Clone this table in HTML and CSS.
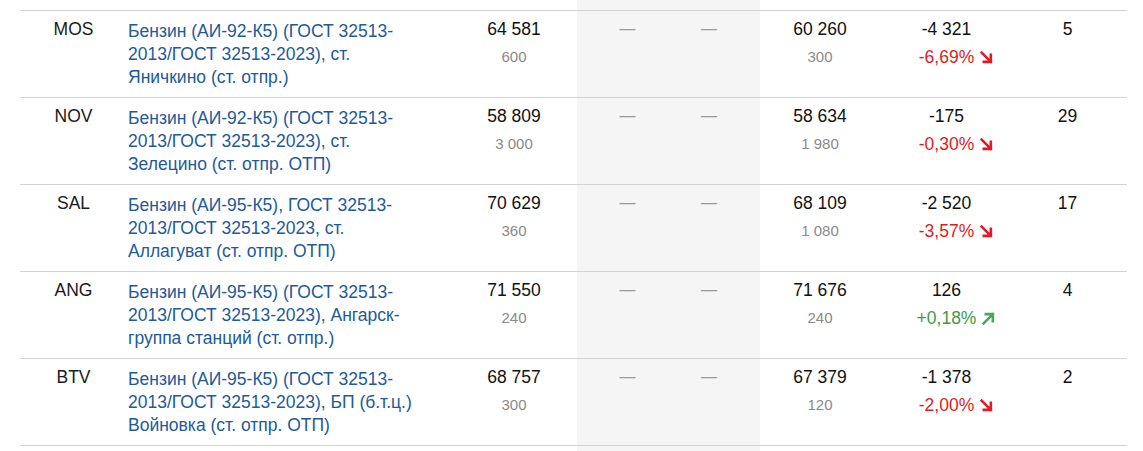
FILE: index.html
```html
<!DOCTYPE html>
<html lang="ru">
<head>
<meta charset="utf-8">
<title>Котировки</title>
<link rel="stylesheet" href="styles.css">
</head>
<body>
<div class="wrap">
<table class="quotes">
  <colgroup>
    <col class="c-code"><col class="c-desc"><col class="c-p1"><col class="c-ga"><col class="c-gb"><col class="c-p2"><col class="c-ch"><col class="c-n">
  </colgroup>
  <tbody>
    <tr class="stub">
      <td></td><td></td><td></td><td class="grey"></td><td class="grey"></td><td></td><td></td><td></td>
    </tr>
    <tr>
      <td class="code">MOS</td>
      <td class="desc"><a href="#">Бензин (АИ-92-К5) (ГОСТ 32513-2013/ГОСТ 32513-2023), ст. Яничкино (ст. отпр.)</a></td>
      <td class="num"><div class="main">64 581</div><div class="sub">600</div></td>
      <td class="grey dash-a">—</td>
      <td class="grey dash-b">—</td>
      <td class="num"><div class="main">60 260</div><div class="sub">300</div></td>
      <td class="num"><div class="main">-4 321</div><div class="pct down">-6,69%<svg class="arr" viewBox="0 0 12 12"><path d="M1.5 1.5 L10 10 M3.5 10 H10 V3.5"/></svg></div></td>
      <td class="num last"><div class="main">5</div></td>
    </tr>
    <tr>
      <td class="code">NOV</td>
      <td class="desc"><a href="#">Бензин (АИ-92-К5) (ГОСТ 32513-2013/ГОСТ 32513-2023), ст. Зелецино (ст. отпр. ОТП)</a></td>
      <td class="num"><div class="main">58 809</div><div class="sub">3 000</div></td>
      <td class="grey dash-a">—</td>
      <td class="grey dash-b">—</td>
      <td class="num"><div class="main">58 634</div><div class="sub">1 980</div></td>
      <td class="num"><div class="main">-175</div><div class="pct down">-0,30%<svg class="arr" viewBox="0 0 12 12"><path d="M1.5 1.5 L10 10 M3.5 10 H10 V3.5"/></svg></div></td>
      <td class="num last"><div class="main">29</div></td>
    </tr>
    <tr>
      <td class="code">SAL</td>
      <td class="desc"><a href="#">Бензин (АИ-95-К5), ГОСТ 32513-2013/ГОСТ 32513-2023, ст. Аллагуват (ст. отпр. ОТП)</a></td>
      <td class="num"><div class="main">70 629</div><div class="sub">360</div></td>
      <td class="grey dash-a">—</td>
      <td class="grey dash-b">—</td>
      <td class="num"><div class="main">68 109</div><div class="sub">1 080</div></td>
      <td class="num"><div class="main">-2 520</div><div class="pct down">-3,57%<svg class="arr" viewBox="0 0 12 12"><path d="M1.5 1.5 L10 10 M3.5 10 H10 V3.5"/></svg></div></td>
      <td class="num last"><div class="main">17</div></td>
    </tr>
    <tr>
      <td class="code">ANG</td>
      <td class="desc"><a href="#">Бензин (АИ-95-К5) (ГОСТ 32513-2013/ГОСТ 32513-2023), Ангарск-группа станций (ст. отпр.)</a></td>
      <td class="num"><div class="main">71 550</div><div class="sub">240</div></td>
      <td class="grey dash-a">—</td>
      <td class="grey dash-b">—</td>
      <td class="num"><div class="main">71 676</div><div class="sub">240</div></td>
      <td class="num"><div class="main">126</div><div class="pct up">+0,18%<svg class="arr" viewBox="0 0 12 12"><path d="M1.5 10.5 L10 2 M3.5 2 H10 V8.5"/></svg></div></td>
      <td class="num last"><div class="main">4</div></td>
    </tr>
    <tr>
      <td class="code">BTV</td>
      <td class="desc"><a href="#">Бензин (АИ-95-К5) (ГОСТ 32513-2013/ГОСТ 32513-2023), БП (б.т.ц.) Войновка (ст. отпр. ОТП)</a></td>
      <td class="num"><div class="main">68 757</div><div class="sub">300</div></td>
      <td class="grey dash-a">—</td>
      <td class="grey dash-b">—</td>
      <td class="num"><div class="main">67 379</div><div class="sub">120</div></td>
      <td class="num"><div class="main">-1 378</div><div class="pct down">-2,00%<svg class="arr" viewBox="0 0 12 12"><path d="M1.5 1.5 L10 10 M3.5 10 H10 V3.5"/></svg></div></td>
      <td class="num last"><div class="main">2</div></td>
    </tr>
    <tr class="stub tail">
      <td></td><td></td><td></td><td class="grey"></td><td class="grey"></td><td></td><td></td><td></td>
    </tr>
  </tbody>
</table>
</div>
</body>
</html>
```
FILE: styles.css
```css
html, body {
  margin: 0;
  padding: 0;
  background: #fff;
}
body {
  font-family: "Liberation Sans", Arial, sans-serif;
  font-size: 17.5px;
  color: #1a1a1a;
}
.wrap {
  padding: 0 0 0 20px;
}
.quotes {
  width: 1107px;
  table-layout: fixed;
  border-collapse: collapse;
  border-spacing: 0;
}
.c-code { width: 107px; }
.c-desc { width: 324px; }
.c-p1 { width: 126px; }
.c-ga { width: 91px; }
.c-gb { width: 92px; }
.c-p2 { width: 120px; }
.c-ch { width: 133px; }
.c-n { width: 114px; }

.quotes td {
  vertical-align: top;
  padding: 9px 0 8px;
  border-bottom: 1px solid #d3d3d3;
  line-height: 18px;
}
.quotes tr.stub td {
  padding: 0;
  height: 10px;
}
.quotes tr.tail td {
  height: 30px;
  border-bottom: 0;
}
.grey {
  background: #f5f5f5;
}
.code {
  text-align: center;
}
.desc {
  padding-left: 1px !important;
  padding-right: 33px !important;
  line-height: 23px !important;
}
.desc a {
  color: #215a9b;
  text-decoration: none;
}
.num {
  text-align: center;
}
.main {
  color: #111;
}
.sub {
  margin-top: 9px;
  line-height: 20px;
  font-size: 15px;
  color: #8a8a8a;
}
.dash-a {
  text-align: center;
  color: #9a9a9a;
  font-size: 16px;
  padding-left: 10px !important;
}
.dash-b {
  text-align: center;
  color: #9a9a9a;
  font-size: 16px;
  padding-right: 10px !important;
}
.last {
  padding-right: 5px !important;
}
.pct {
  margin-top: 9px;
  line-height: 20px;
}
.pct.down { color: #e01b22; }
.pct.up { color: #3d9a46; }
.arr {
  display: inline-block;
  width: 13px;
  height: 13px;
  margin-left: 6px;
  margin-right: -19px;
  vertical-align: -1px;
  fill: none;
  stroke: currentColor;
  stroke-width: 2.4;
  stroke-linecap: square;
}
.pct.up .arr { stroke: #49a85a; }
```
